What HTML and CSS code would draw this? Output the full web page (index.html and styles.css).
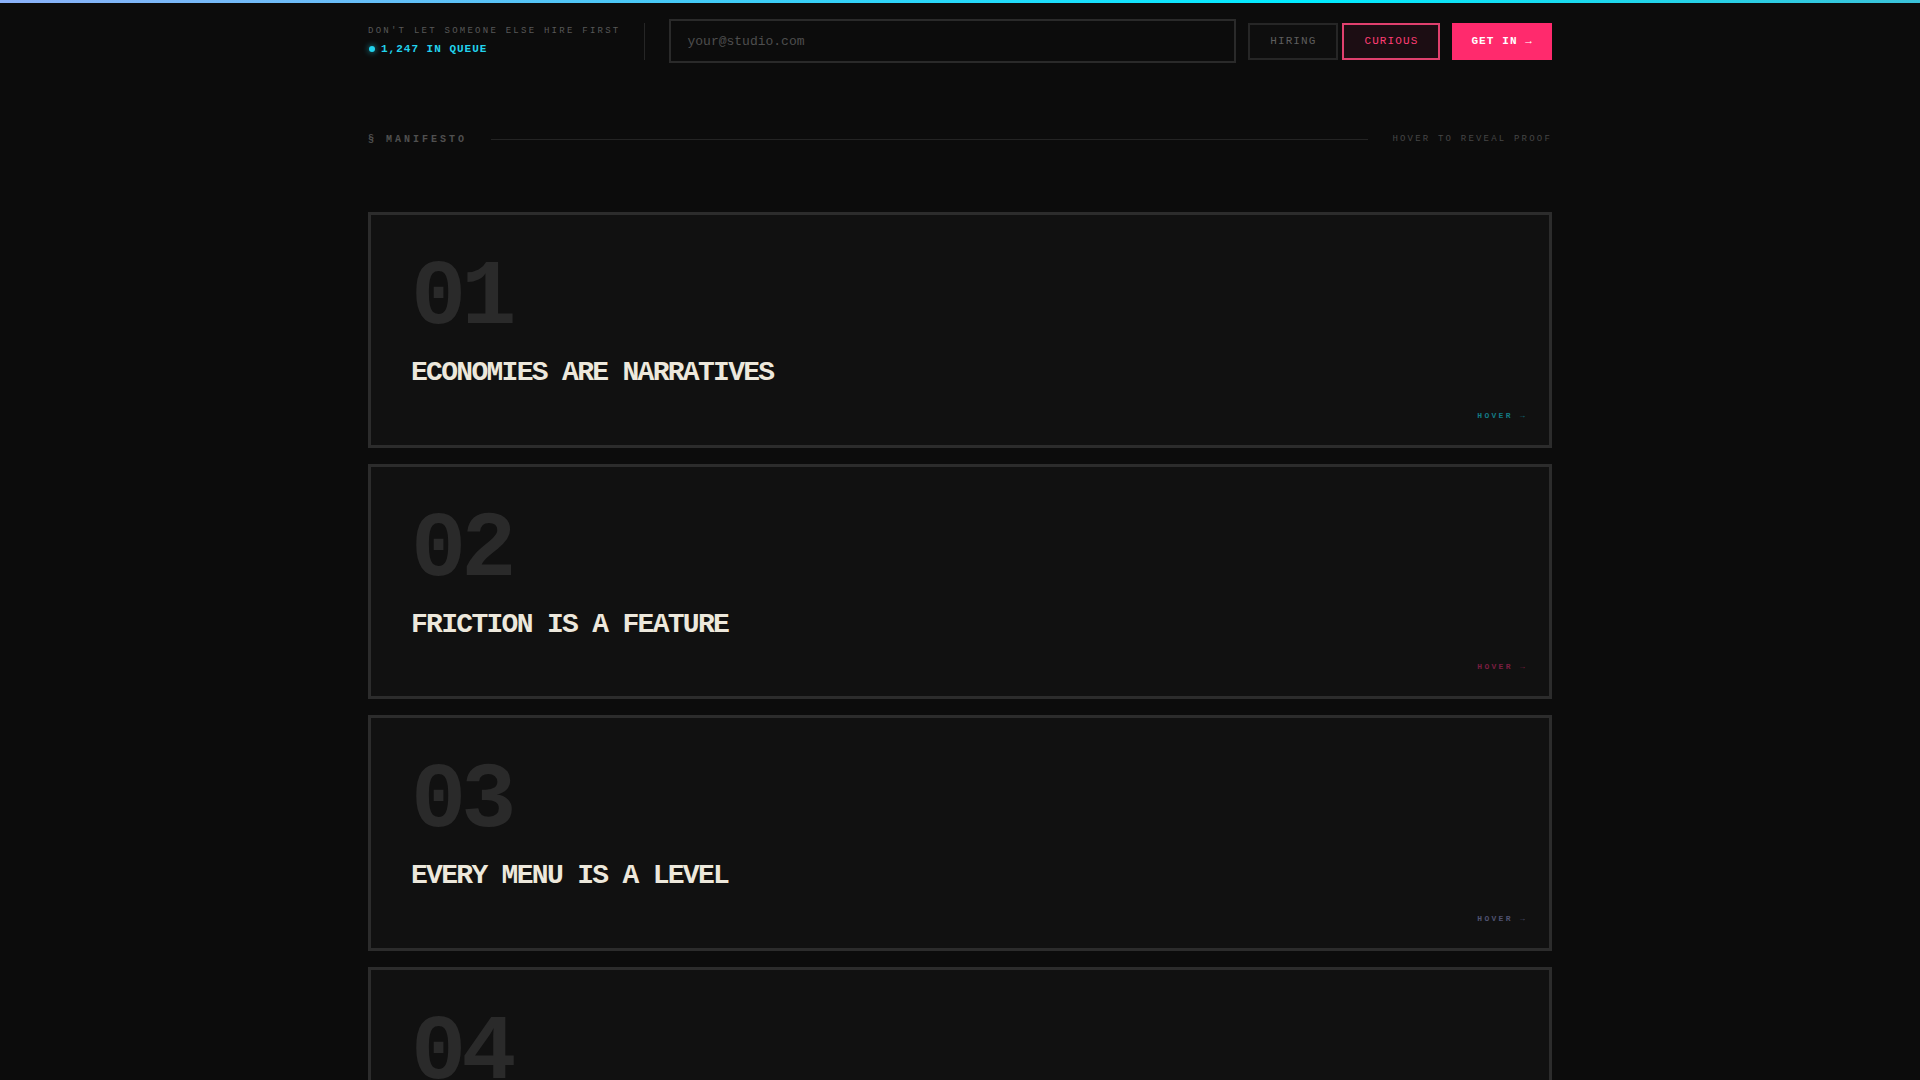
FILE: index.html
```html
<!DOCTYPE html>
<html lang="en">
<head>
    <meta charset="UTF-8">
    <meta name="viewport" content="width=device-width, initial-scale=1.0">
    <title>Manifesto — Waitlist</title>
    <link rel="stylesheet" href="styles.css">
</head>
<body>
    <!-- Accent strip -->
    <div class="top-strip"></div>

    <div class="page">
        <!-- Waitlist header -->
        <header class="signup">
            <div class="signup-meta">
                <div class="signup-kicker">DON'T LET SOMEONE ELSE HIRE FIRST</div>
                <div class="signup-queue"><span class="pulse"></span>1,247 IN QUEUE</div>
            </div>
            <div class="signup-divider"></div>
            <input class="signup-email" type="email" placeholder="your@studio.com">
            <div class="signup-toggle">
                <button class="toggle-btn">HIRING</button>
                <button class="toggle-btn active">CURIOUS</button>
            </div>
            <button class="signup-submit">GET IN →</button>
        </header>

        <!-- Section label -->
        <div class="section-bar">
            <span class="section-title">§ MANIFESTO</span>
            <span class="section-rule"></span>
            <span class="section-hint">HOVER TO REVEAL PROOF</span>
        </div>

        <!-- Manifesto cards -->
        <section class="cards">
            <article class="card card-cyan">
                <div class="card-num">01</div>
                <h2 class="card-title">ECONOMIES ARE NARRATIVES</h2>
                <div class="card-hover">HOVER →</div>
            </article>
            <article class="card card-pink">
                <div class="card-num">02</div>
                <h2 class="card-title">FRICTION IS A FEATURE</h2>
                <div class="card-hover">HOVER →</div>
            </article>
            <article class="card card-violet">
                <div class="card-num">03</div>
                <h2 class="card-title">EVERY MENU IS A LEVEL</h2>
                <div class="card-hover">HOVER →</div>
            </article>
            <article class="card card-cyan">
                <div class="card-num">04</div>
                <h2 class="card-title">PLAYERS WRITE THE RULES</h2>
                <div class="card-hover">HOVER →</div>
            </article>
        </section>
    </div>
</body>
</html>
```

FILE: styles.css
```css
html {
    scrollbar-width: none;
}

body {
    margin: 0;
    padding: 0;
    background: #0c0c0c;
    color: #ede8dc;
    font-family: "Liberation Mono", "DejaVu Sans Mono", monospace;
}

.top-strip {
    height: 3px;
    background: linear-gradient(90deg, #8cb2fa 0%, #3ccdf6 40%, #00ecff 68%, #3cc3da 100%);
}

.page {
    width: 1184px;
    margin: 0 auto;
}

/* Header */
.signup {
    display: flex;
    align-items: center;
    padding-top: 16px;
}

.signup-meta {
    display: flex;
    flex-direction: column;
    gap: 5px;
    padding-bottom: 2px;
}

.signup-kicker {
    font-size: 9px;
    line-height: 12px;
    letter-spacing: 2.25px;
    color: #585858;
}

.signup-queue {
    display: flex;
    align-items: center;
    font-size: 11px;
    line-height: 14px;
    font-weight: bold;
    letter-spacing: 1px;
    color: #22d3ee;
}

.pulse {
    width: 6px;
    height: 6px;
    border-radius: 50%;
    background: #22d3ee;
    box-shadow: 0 0 6px rgba(34, 211, 238, 0.8);
    margin: 0 6px 0 1px;
}

.signup-divider {
    width: 1px;
    height: 37px;
    background: #262626;
    margin: 0 24px;
}

.signup-email {
    flex: 1;
    height: 44px;
    box-sizing: border-box;
    padding: 0 16px;
    background: #0c0c0c;
    border: 2px solid #2a2a2a;
    color: #ede8dc;
    font-family: inherit;
    font-size: 13px;
    outline: none;
}

.signup-email::placeholder {
    color: #4e4e4e;
}

.signup-toggle {
    display: flex;
    gap: 4px;
    margin-left: 12px;
}

.toggle-btn {
    height: 37px;
    padding: 0 20px;
    background: #0e0e0e;
    border: 2px solid #262626;
    color: #5e5e5e;
    font-family: inherit;
    font-size: 11px;
    letter-spacing: 1.1px;
    cursor: pointer;
}

.toggle-btn.active {
    background: #1c0d13;
    border-color: #e0406e;
    color: #ff3d74;
}

.signup-submit {
    height: 37px;
    margin-left: 12px;
    padding: 0 19px;
    background: #ff2a6d;
    border: none;
    color: #fff;
    font-family: inherit;
    font-size: 11px;
    font-weight: bold;
    letter-spacing: 1.1px;
    cursor: pointer;
}

/* Section label */
.section-bar {
    display: flex;
    align-items: center;
    gap: 24px;
    margin-top: 70px;
    height: 12px;
}

.section-title {
    font-size: 10px;
    font-weight: bold;
    letter-spacing: 3px;
    color: #505050;
}

.section-rule {
    flex: 1;
    height: 1px;
    background: #242424;
}

.section-hint {
    font-size: 9px;
    letter-spacing: 2.2px;
    color: #464646;
}

/* Cards */
.cards {
    display: flex;
    flex-direction: column;
    gap: 16px;
    margin-top: 67px;
}

.card {
    background: #111111;
    border: 3px solid #2c2c2c;
    padding: 38px 22px 24px 40px;
}

.card-num {
    font-size: 92px;
    line-height: 1;
    font-weight: bold;
    letter-spacing: -5px;
    color: #2a2a2a;
}

.card-title {
    margin: 11px 0 0;
    font-size: 28px;
    line-height: 1.2;
    font-weight: bold;
    letter-spacing: -1.7px;
    color: #ede8dc;
}

.card-hover {
    margin-top: 21px;
    text-align: right;
    font-size: 8px;
    line-height: 10px;
    font-weight: bold;
    letter-spacing: 2.3px;
}

.card-cyan .card-hover {
    color: #137a84;
}

.card-pink .card-hover {
    color: #7a1e40;
}

.card-violet .card-hover {
    color: #4f5270;
}
```
